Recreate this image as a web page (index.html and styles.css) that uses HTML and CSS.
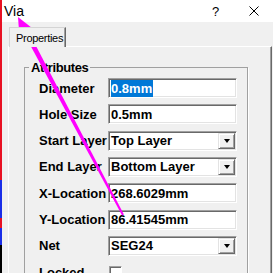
FILE: index.html
```html
<!DOCTYPE html>
<html lang="en">
<head>
    <meta charset="UTF-8">
    <title>Via</title>
    <link rel="stylesheet" href="styles.css">
</head>
<body>
    <div class="screen">
        <div class="edge"></div>
        <div class="dialog">
            <div class="titlebar">
                <span class="title">Via</span>
                <span class="help">?</span>
                <svg class="close" width="10" height="10" viewBox="0 0 10 10">
                    <path d="M0.5 0.5 L9.5 9.5 M9.5 0.5 L0.5 9.5" stroke="#000" stroke-width="1"/>
                </svg>
            </div>
            <div class="client">
                <div class="tabs">
                    <div class="tab">Properties</div>
                </div>
                <div class="panel">
                    <fieldset class="group">
                        <legend>Attributes</legend>
                        <div class="rows">
                            <label>Diameter</label>
                            <div class="field"><span class="selected">0.8mm</span></div>

                            <label>Hole Size</label>
                            <div class="field">0.5mm</div>

                            <label>Start Layer</label>
                            <div class="field combo"><span class="value">Top Layer</span><span class="drop"></span></div>

                            <label>End Layer</label>
                            <div class="field combo"><span class="value">Bottom Layer</span><span class="drop"></span></div>

                            <label>X-Location</label>
                            <div class="field">268.6029mm</div>

                            <label>Y-Location</label>
                            <div class="field">86.41545mm</div>

                            <label>Net</label>
                            <div class="field combo"><span class="value">SEG24</span><span class="drop"></span></div>

                            <label>Locked</label>
                            <div class="check-cell"><span class="checkbox"></span></div>
                        </div>
                    </fieldset>
                </div>
            </div>
        </div>
        <!-- annotation arrow drawn over the dialog -->
        <svg class="arrow" width="273" height="273" viewBox="0 0 273 273">
            <polygon points="18,17 31.7,27.8 19.3,34.4" fill="#ff00ff"/>
            <polygon points="27.7,29.9 123.9,214.5 122.1,215.5 23.3,32.3" fill="#ff00ff"/>
        </svg>
    </div>
</body>
</html>
```

FILE: styles.css
```css
body {
    margin: 0;
    width: 273px;
    height: 273px;
    overflow: hidden;
    font-family: "Liberation Sans", Arial, sans-serif;
    background: #f0f0f0;
    color: #000;
}
.screen {
    position: relative;
    display: flex;
    height: 273px;
}
.edge {
    width: 2px;
    flex: none;
    background: linear-gradient(#e81123 0, #e81123 180px, #1a2ee8 180px, #1a2ee8 218px,
        #e81123 218px, #e81123 228px, #1a2ee8 228px, #1a2ee8 245px, #000 245px);
}
.dialog {
    flex: 1;
    display: flex;
    flex-direction: column;
    min-width: 0;
}
.titlebar {
    height: 22px;
    flex: none;
    background: #fff;
    display: flex;
    align-items: center;
    padding-left: 2px;
}
.title {
    flex: 1;
    font-size: 14px;
}
.help {
    font-size: 13px;
    width: 37px;
}
.close {
    margin-right: 14px;
}
.client {
    flex: 1;
    padding: 5px 0 0 6px;
}
.tabs {
    display: flex;
    height: 19px;
    padding-left: 1px;
}
.tab {
    width: 57px;
    font-size: 11px;
    padding: 4px 0 0 6px;
    box-sizing: border-box;
    border-top: 1px solid #d4d4d4;
    border-left: 1px solid #d4d4d4;
    border-right: 1px solid #696969;
    box-shadow: inset -1px 0 0 #a0a0a0;
    margin-bottom: -1px;
    position: relative;
    z-index: 1;
    background: #f0f0f0;
    letter-spacing: -0.3px;
}
.panel {
    height: 240px;
    border-top: 1px solid #fff;
    border-left: 1px solid #fff;
    border-right: 1px solid #696969;
    box-shadow: inset -1px 0 0 #a0a0a0;
    margin-right: 1px;
    padding-left: 15px;
}
.group {
    width: 218px;
    margin: 13px 0 0 0;
    padding: 0 0 10px 4px;
    border: 1px solid #a0a0a0;
    box-shadow: 1px 1px 0 #fff;
}
.group legend {
    font-size: 13px;
    font-weight: bold;
    padding: 0 2px;
    line-height: 15px;
    letter-spacing: -0.4px;
}
.rows {
    display: grid;
    grid-template-columns: 69px 129px;
    grid-auto-rows: 20px;
    row-gap: 6.33px;
    margin: 3px 0 0 10px;
    font-size: 13px;
    font-weight: bold;
}
.rows label {
    display: flex;
    align-items: center;
    white-space: nowrap;
}
.field {
    display: flex;
    align-items: center;
    background: #fff;
    border-top: 1px solid #a0a0a0;
    border-left: 1px solid #a0a0a0;
    border-right: 1px solid #fff;
    border-bottom: 1px solid #fff;
    box-shadow: inset 1px 1px 0 #696969, inset -1px -1px 0 #e3e3e3;
    padding-left: 2px;
    white-space: nowrap;
    overflow: hidden;
}
.selected {
    background: #0078d7;
    color: #fff;
    padding: 1px 1px 1px 0;
}
.combo .value {
    flex: 1;
}
.drop {
    width: 17px;
    height: 16px;
    margin-right: 1px;
    box-sizing: border-box;
    background: #f0f0f0;
    border-top: 1px solid #e3e3e3;
    border-left: 1px solid #e3e3e3;
    border-right: 1px solid #696969;
    border-bottom: 1px solid #696969;
    box-shadow: inset 1px 1px 0 #fff, inset -1px -1px 0 #a0a0a0;
    display: flex;
    align-items: center;
    justify-content: center;
}
.drop::after {
    content: "";
    border-left: 3.5px solid transparent;
    border-right: 3.5px solid transparent;
    border-top: 4px solid #000;
}
.check-cell {
    display: flex;
    align-items: center;
}
.checkbox {
    width: 13px;
    height: 13px;
    box-sizing: border-box;
    background: #fff;
    border-top: 1px solid #a0a0a0;
    border-left: 1px solid #a0a0a0;
    border-right: 1px solid #fff;
    border-bottom: 1px solid #fff;
    box-shadow: inset 1px 1px 0 #696969;
    margin-left: 1px;
}
.arrow {
    position: absolute;
    top: 0;
    left: 0;
    pointer-events: none;
}
```
